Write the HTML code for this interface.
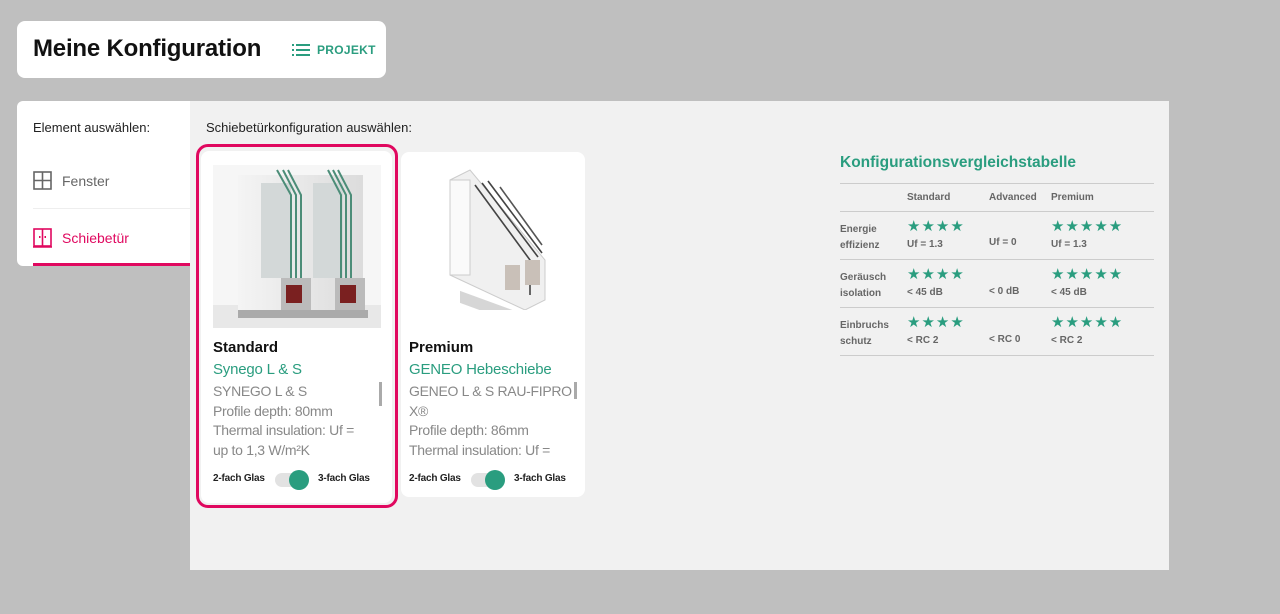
<!DOCTYPE html>
<html><head><meta charset="utf-8"><style>
*{margin:0;padding:0;box-sizing:border-box}
body{width:1280px;height:614px;background:#bfbfbf;font-family:"Liberation Sans",sans-serif;position:relative;overflow:hidden}
.abs{position:absolute}
.hdr{left:17px;top:21px;width:369px;height:57px;background:#fff;border-radius:8px}
.hdr h1{position:absolute;left:16px;top:14px;font-size:24px;font-weight:bold;color:#111;letter-spacing:-0.2px}
.proj{position:absolute;top:22px;color:#2a9d7f;font-size:12px;font-weight:bold;letter-spacing:.3px}
.left{left:17px;top:101px;width:174px;height:165px;background:#fff;border-radius:6px 0 0 6px}
.main{left:190px;top:101px;width:979px;height:469px;background:#f1f1f1}
.t{font-size:13px;color:#222}
.card{background:#fff;border-radius:8px}
.sel{left:196px;top:144px;width:202px;height:364px;border:3px solid #e0085f;border-radius:12px}
.ct{font-size:14px;line-height:19.5px;color:#888;letter-spacing:-0.3px;white-space:nowrap}
.tog{width:34px;height:14px;background:#e2e2e2;border-radius:7px}
.knob{width:20px;height:20px;background:#2a9d7f;border-radius:50%}
.small{font-size:10px;color:#222;font-weight:bold;letter-spacing:-0.2px}
.tb{font-size:10px;color:#666;font-weight:bold}
.st{color:#2a9d7f;font-size:15px;letter-spacing:1px}
.ln{height:1px;background:#ccc;left:840px;width:314px}
</style></head><body>
<div class="abs hdr"><h1>Meine Konfiguration</h1>
<svg class="abs" style="left:275px;top:23px" width="18" height="12" viewBox="0 0 18 12"><g fill="#2a9d7f"><rect x="0" y="0" width="2" height="2"/><rect x="0" y="5" width="2" height="2"/><rect x="0" y="10" width="2" height="2"/><rect x="4" y="0" width="14" height="2"/><rect x="4" y="5" width="14" height="2"/><rect x="4" y="10" width="14" height="2"/></g></svg>
<span class="proj" style="left:300px">PROJEKT</span></div>

<div class="abs left">
<div class="abs t" style="left:16px;top:19px">Element auswählen:</div>
<svg class="abs" style="left:16px;top:70px" width="19" height="19" viewBox="0 0 19 19"><rect x="1" y="1" width="17" height="17" fill="none" stroke="#666" stroke-width="1.6"/><path d="M9.5 1V18M1 9.5H18" stroke="#666" stroke-width="1.6"/></svg>
<div class="abs" style="left:45px;top:72px;font-size:14px;color:#666">Fenster</div>
<div class="abs" style="left:16px;top:107px;width:158px;height:1px;background:#eee"></div>
<svg class="abs" style="left:16px;top:127px" width="19" height="20" viewBox="0 0 19 20"><rect x="1" y="1" width="17" height="17" fill="none" stroke="#e0085f" stroke-width="1.6"/><path d="M9.5 1V18M0 19H19" stroke="#e0085f" stroke-width="1.6"/><rect x="6" y="8" width="1.5" height="2" fill="#e0085f"/><rect x="11.5" y="8" width="1.5" height="2" fill="#e0085f"/></svg>
<div class="abs" style="left:45px;top:129px;font-size:14px;color:#e0085f">Schiebetür</div>
<div class="abs" style="left:16px;top:162px;width:158px;height:3px;background:#e0085f"></div>
</div>

<div class="abs main">
<div class="abs t" style="left:16px;top:19px">Schiebetürkonfiguration auswählen:</div>
</div>

<div class="abs sel"></div>
<div class="abs card" style="left:201px;top:151px;width:191px;height:352px"></div>
<div class="abs card" style="left:401px;top:152px;width:184px;height:345px"></div>

<svg class="abs" style="left:213px;top:165px" width="168" height="163" viewBox="0 0 168 163">
<defs><linearGradient id="g1" x1="0" x2="1"><stop offset="0" stop-color="#f4f4f4"/><stop offset="1" stop-color="#dcdcdc"/></linearGradient></defs>
<rect x="0" y="0" width="168" height="163" fill="#f6f6f6"/>
<rect x="0" y="140" width="168" height="23" fill="#e8e8e8"/>
<rect x="25" y="10" width="125" height="135" fill="url(#g1)"/>
<rect x="48" y="18" width="30" height="95" fill="#d3d8d8"/>
<rect x="100" y="18" width="30" height="95" fill="#d3d8d8"/>
<path d="M64 5L78 30V118M70 5L83 30V118M75 5L88 30V118" stroke="#4c8d78" stroke-width="2" fill="none"/>
<path d="M115 5L128 30V118M120 5L133 30V118M125 5L138 30V118" stroke="#4c8d78" stroke-width="2" fill="none"/>
<rect x="68" y="113" width="30" height="40" fill="#bbb"/><rect x="73" y="120" width="16" height="18" fill="#7a2020"/>
<rect x="122" y="113" width="30" height="40" fill="#bbb"/><rect x="127" y="120" width="16" height="18" fill="#7a2020"/>
<rect x="25" y="145" width="130" height="8" fill="#aaa"/>
</svg>

<svg class="abs" style="left:430px;top:165px" width="120" height="145" viewBox="0 0 120 145">
<path d="M20 15L40 5L115 95V135L95 145L20 110Z" fill="#f0f0f0" stroke="#ccc"/>
<rect x="20" y="15" width="20" height="95" fill="#fafafa" stroke="#ccc"/>
<path d="M45 20L100 95V130M52 18L108 92M58 16L112 88" stroke="#444" stroke-width="1.6" fill="none"/>
<path d="M70 22L112 80" stroke="#555" stroke-width="1.6" fill="none"/>
<rect x="75" y="100" width="15" height="25" fill="#c9c0b8"/><rect x="95" y="95" width="15" height="25" fill="#c9c0b8"/>
<rect x="30" y="115" width="70" height="12" fill="#999" transform="skewY(20)" opacity=".4"/>
</svg>

<div class="abs" style="left:213px;top:339px;font-size:15px;font-weight:bold;color:#111">Standard</div>
<div class="abs" style="left:213px;top:361px;font-size:15px;color:#2a9d7f;letter-spacing:-0.2px">Synego L &amp; S</div>
<div class="abs ct" style="left:213px;top:382px">SYNEGO L &amp; S<br>Profile depth: 80mm<br>Thermal insulation: Uf =<br>up to 1,3 W/m²K</div>
<div class="abs" style="left:379px;top:382px;width:3px;height:24px;background:#aaa"></div>
<div class="abs small" style="left:213px;top:473px">2-fach Glas</div>
<div class="abs tog" style="left:275px;top:473px"></div><div class="abs knob" style="left:289px;top:470px"></div>
<div class="abs small" style="left:318px;top:473px">3-fach Glas</div>

<div class="abs" style="left:409px;top:339px;font-size:15px;font-weight:bold;color:#111">Premium</div>
<div class="abs" style="left:409px;top:361px;font-size:15px;color:#2a9d7f;letter-spacing:-0.2px">GENEO Hebeschiebe</div>
<div class="abs ct" style="left:409px;top:382px;width:165px;height:74px;overflow:hidden">GENEO L &amp; S RAU-FIPRO<br>X®<br>Profile depth: 86mm<br>Thermal insulation: Uf =</div>
<div class="abs" style="left:574px;top:382px;width:3px;height:17px;background:#aaa"></div>
<div class="abs small" style="left:409px;top:473px">2-fach Glas</div>
<div class="abs tog" style="left:471px;top:473px"></div><div class="abs knob" style="left:485px;top:470px"></div>
<div class="abs small" style="left:514px;top:473px">3-fach Glas</div>

<div class="abs" style="left:840px;top:154px;font-size:15.5px;font-weight:bold;color:#2a9d7f">Konfigurationsvergleichstabelle</div>
<div class="abs ln" style="top:183px"></div>
<div class="abs tb" style="left:907px;top:192px">Standard</div>
<div class="abs tb" style="left:989px;top:192px">Advanced</div>
<div class="abs tb" style="left:1051px;top:192px">Premium</div>
<div class="abs ln" style="top:211px"></div>
<div class="abs ln" style="top:259px"></div>
<div class="abs ln" style="top:307px"></div>
<div class="abs ln" style="top:355px"></div>

<div class="abs tb" style="left:840px;top:222px;line-height:16px">Energie<br>effizienz</div>
<div class="abs st" style="left:907px;top:217px">★★★★</div>
<div class="abs tb" style="left:907px;top:239px">Uf = 1.3</div>
<div class="abs tb" style="left:989px;top:237px">Uf = 0</div>
<div class="abs st" style="left:1051px;top:217px">★★★★★</div>
<div class="abs tb" style="left:1051px;top:239px">Uf = 1.3</div>

<div class="abs tb" style="left:840px;top:270px;line-height:16px">Geräusch<br>isolation</div>
<div class="abs st" style="left:907px;top:265px">★★★★</div>
<div class="abs tb" style="left:907px;top:287px">&lt; 45 dB</div>
<div class="abs tb" style="left:989px;top:286px">&lt; 0 dB</div>
<div class="abs st" style="left:1051px;top:265px">★★★★★</div>
<div class="abs tb" style="left:1051px;top:287px">&lt; 45 dB</div>

<div class="abs tb" style="left:840px;top:318px;line-height:16px">Einbruchs<br>schutz</div>
<div class="abs st" style="left:907px;top:313px">★★★★</div>
<div class="abs tb" style="left:907px;top:335px">&lt; RC 2</div>
<div class="abs tb" style="left:989px;top:334px">&lt; RC 0</div>
<div class="abs st" style="left:1051px;top:313px">★★★★★</div>
<div class="abs tb" style="left:1051px;top:335px">&lt; RC 2</div>
</body></html>
